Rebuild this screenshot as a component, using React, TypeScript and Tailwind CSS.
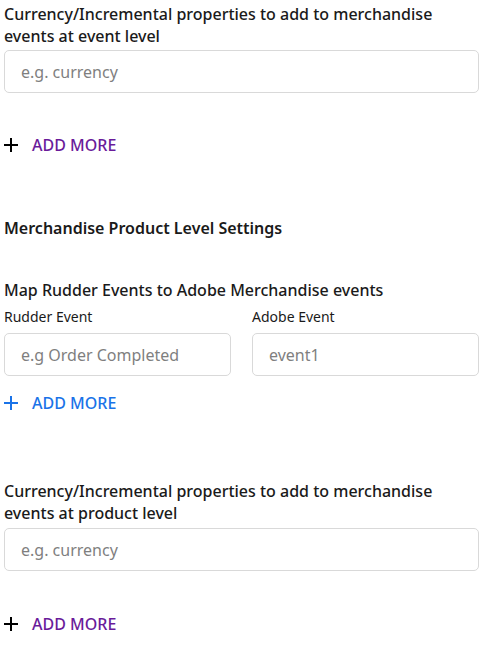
import React from "react";

function Plus({ color }: { color: string }) {
  return (
    <svg width="14" height="14" viewBox="0 0 14 14" className="shrink-0">
      <path d="M7 0v14M0 7h14" stroke={color} strokeWidth="2" fill="none" />
    </svg>
  );
}

function AddMore({ variant }: { variant: "purple" | "blue" }) {
  const blue = variant === "blue";
  return (
    <div className="flex items-center h-[22px]">
      <Plus color={blue ? "#1a73e8" : "#000000"} />
      <span
        className={
          "ml-[14px] text-[16px] font-medium leading-[22px] " +
          (blue ? "text-[#1a73e8]" : "text-[#6a1b9a]")
        }
      >
        ADD MORE
      </span>
    </div>
  );
}

function Input({ placeholder }: { placeholder: string }) {
  return (
    <div className="h-[43px] w-full rounded-[5px] border border-[#d9d9d9] bg-white flex items-center px-[16px]">
      <span className="text-[16px] text-[#7f7f7f] leading-[22px]">{placeholder}</span>
    </div>
  );
}

export default function App() {
  return (
    <div
      className="w-[485px] min-h-[645px] bg-white pl-[4px] pr-[6px] text-[#1a1a1a]"
      style={{ fontFamily: '"Noto Sans", sans-serif' }}
    >
      <div className="pt-[3px] text-[16px] font-medium leading-[22px]">
        Currency/Incremental properties to add to merchandise events at event level
      </div>
      <div className="mt-[3px]">
        <Input placeholder="e.g. currency" />
      </div>
      <div className="mt-[41px]">
        <AddMore variant="purple" />
      </div>
      <div className="mt-[61px] text-[16px] font-semibold leading-[22px]">
        Merchandise Product Level Settings
      </div>
      <div className="mt-[40px] text-[16px] font-medium leading-[22px]">
        Map Rudder Events to Adobe Merchandise events
      </div>
      <div className="mt-[6px] grid grid-cols-2 gap-x-[21px]">
        <div>
          <div className="text-[14px] leading-[19px]">Rudder Event</div>
          <div className="mt-[7px]">
            <Input placeholder="e.g Order Completed" />
          </div>
        </div>
        <div>
          <div className="text-[14px] leading-[19px]">Adobe Event</div>
          <div className="mt-[7px]">
            <Input placeholder="event1" />
          </div>
        </div>
      </div>
      <div className="mt-[16px]">
        <AddMore variant="blue" />
      </div>
      <div className="mt-[66px] text-[16px] font-medium leading-[22px]">
        Currency/Incremental properties to add to merchandise events at product level
      </div>
      <div className="mt-[4px]">
        <Input placeholder="e.g. currency" />
      </div>
      <div className="mt-[42px]">
        <AddMore variant="purple" />
      </div>
    </div>
  );
}
